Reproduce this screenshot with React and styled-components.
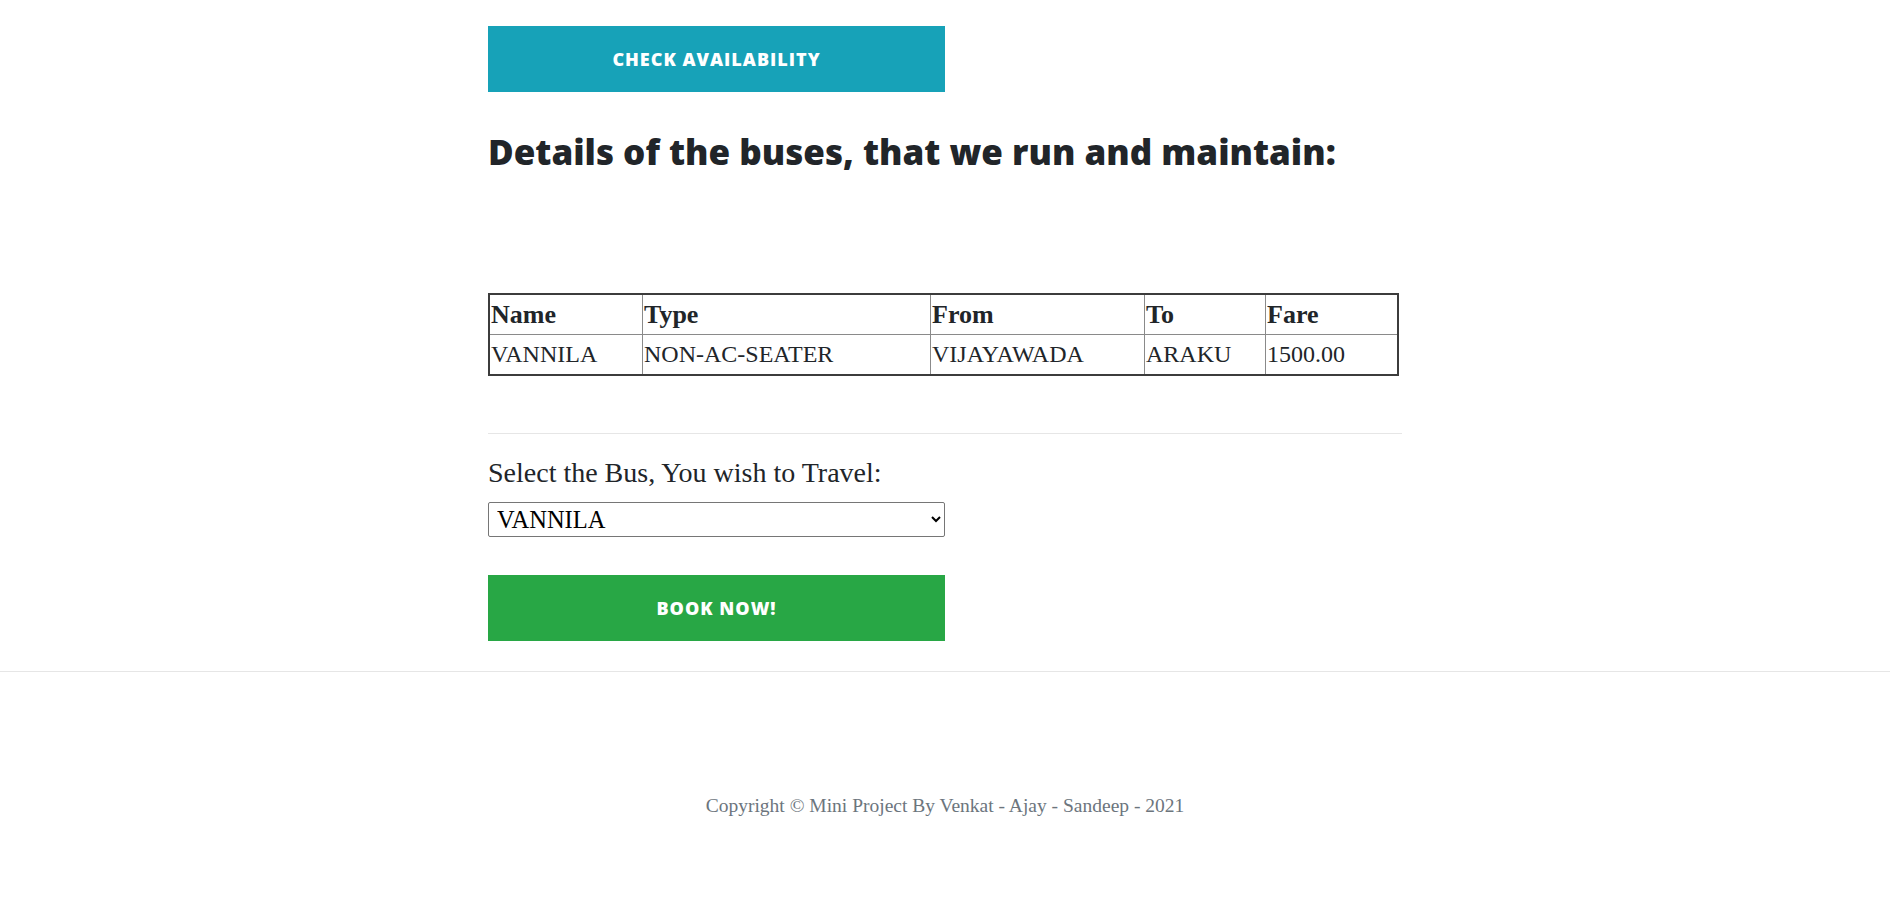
import React from "react";
import styled, { createGlobalStyle } from "styled-components";

const GlobalStyle = createGlobalStyle`
  html, body {
    margin: 0;
    padding: 0;
    background: #ffffff;
  }
  body {
    font-family: "Liberation Serif", "Times New Roman", serif;
    color: #212529;
  }
`;

const Page = styled.div`
  display: flex;
  flex-direction: column;
  min-height: 897px;
`;

const Main = styled.main`
  width: 914px;
  margin: 0 auto;
  padding-top: 26px;
  display: flex;
  flex-direction: column;
  align-items: flex-start;
`;

const ActionButton = styled.button`
  width: 457px;
  height: 66px;
  margin-top: ${(p) => p.$top || 0}px;
  border: none;
  border-radius: 0;
  padding: 0;
  background: ${(p) => (p.$variant === "success" ? "#28a745" : "#17a2b8")};
  color: #ffffff;
  font-family: "Open Sans", "DejaVu Sans", sans-serif;
  font-weight: 800;
  font-size: 18px;
  letter-spacing: 1px;
  text-transform: uppercase;
  cursor: pointer;
`;

const Heading = styled.h2`
  margin: 38px 0 0;
  font-family: "Open Sans", "DejaVu Sans", sans-serif;
  font-weight: 800;
  font-size: 35px;
  line-height: 43px;
  color: #212529;
`;

const BusTable = styled.table`
  margin-top: 120px;
  width: 911px;
  table-layout: fixed;
  border-collapse: collapse;
  border: 2px solid #3c3c3c;
  font-family: "Liberation Serif", "Times New Roman", serif;
  color: #212529;
`;

const HeadCell = styled.th`
  width: ${(p) => (p.$w ? `${p.$w}px` : "auto")};
  padding: 1px;
  border: 1px solid #8a8a8a;
  text-align: left;
  font-weight: 700;
  font-size: 26px;
  line-height: 37px;
  white-space: nowrap;
`;

const Cell = styled.td`
  padding: 1px;
  border: 1px solid #8a8a8a;
  font-size: 24px;
  line-height: 37px;
  white-space: nowrap;
`;

const Divider = styled.hr`
  width: 100%;
  margin: 57px 0 0;
  border: 0;
  border-top: 1px solid #e6e6e6;
`;

const FieldLabel = styled.label`
  margin-top: 18px;
  font-size: 28px;
  line-height: 42px;
  color: #212529;
`;

const BusSelect = styled.select`
  margin-top: 8px;
  width: 457px;
  height: 35px;
  padding: 0 4px;
  border: 1px solid #767676;
  border-radius: 2px;
  background: #ffffff;
  color: #000000;
  font-family: "Liberation Serif", "Times New Roman", serif;
  font-size: 24.5px;
`;

const FooterRule = styled.hr`
  width: 100%;
  margin: 30px 0 0;
  border: 0;
  border-top: 1px solid #e6e6e6;
`;

const Footer = styled.footer`
  padding-top: 119px;
  text-align: center;
  font-size: 19.5px;
  line-height: 29px;
  color: #6c757d;
`;

const columns = [
  { key: "name", label: "Name", w: 150 },
  { key: "type", label: "Type", w: 285 },
  { key: "from", label: "From", w: 211 },
  { key: "to", label: "To", w: 118 },
  { key: "fare", label: "Fare" },
];

const buses = [
  { name: "VANNILA", type: "NON-AC-SEATER", from: "VIJAYAWADA", to: "ARAKU", fare: "1500.00" },
];

export default function App() {
  return (
    <Page>
      <GlobalStyle />
      <Main>
        <ActionButton $variant="info">Check Availability</ActionButton>
        <Heading>Details of the buses, that we run and maintain:</Heading>
        <BusTable>
          <thead>
            <tr>
              {columns.map((c) => (
                <HeadCell key={c.key} $w={c.w}>
                  {c.label}
                </HeadCell>
              ))}
            </tr>
          </thead>
          <tbody>
            {buses.map((b) => (
              <tr key={b.name}>
                {columns.map((c) => (
                  <Cell key={c.key}>{b[c.key]}</Cell>
                ))}
              </tr>
            ))}
          </tbody>
        </BusTable>
        <Divider />
        <FieldLabel htmlFor="bus">Select the Bus, You wish to Travel:</FieldLabel>
        <BusSelect id="bus" defaultValue="VANNILA">
          <option value="VANNILA">VANNILA</option>
        </BusSelect>
        <ActionButton $variant="success" $top={38}>
          Book Now!
        </ActionButton>
      </Main>
      <FooterRule />
      <Footer>Copyright © Mini Project By Venkat - Ajay - Sandeep - 2021</Footer>
    </Page>
  );
}
